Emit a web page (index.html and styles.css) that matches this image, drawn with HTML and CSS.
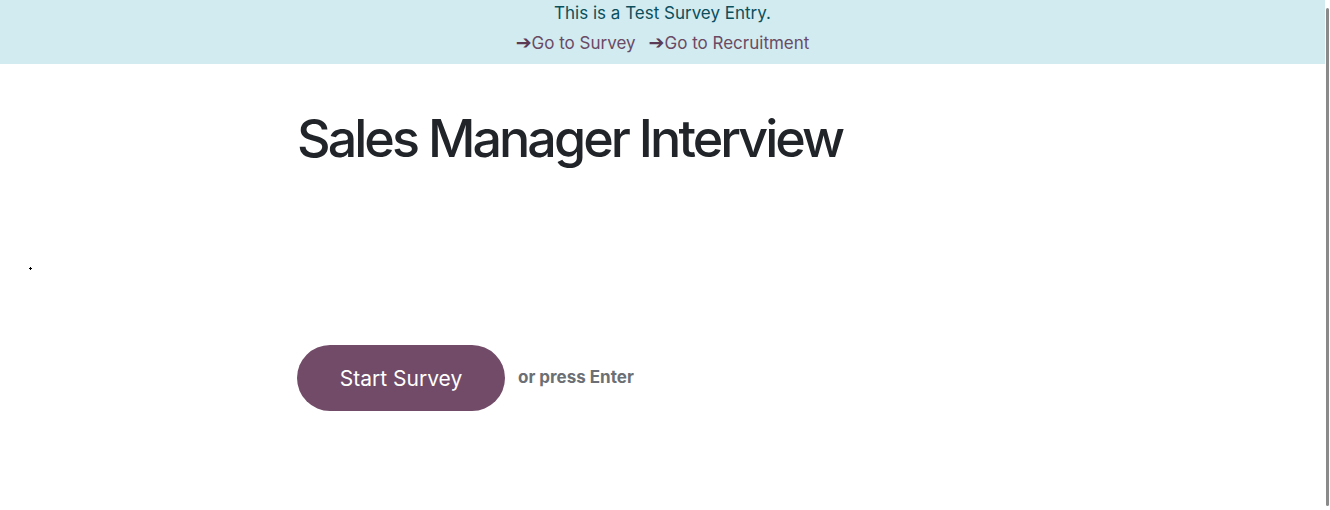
FILE: index.html
```html
<!DOCTYPE html>
<html lang="en">
<head>
  <meta charset="UTF-8">
  <title>Sales Manager Interview</title>
  <link rel="stylesheet" href="styles.css">
</head>
<body>
  <div class="page">
    <div class="test-banner">
      <div class="test-note">This is a Test Survey Entry.</div>
      <div class="test-links">
        <a href="#"><span class="arrow">&#10132;</span>Go to Survey</a>
        <a href="#"><span class="arrow">&#10132;</span>Go to Recruitment</a>
      </div>
    </div>

    <div class="survey-wrap">
      <h1 class="survey-title">Sales Manager Interview</h1>
      <div class="survey-start">
        <button type="button" class="start-btn">Start Survey</button>
        <span class="hint">or press Enter</span>
      </div>
    </div>
  </div>
  <span class="cursor-dot"></span>
  <div class="scroll-thumb"></div>
</body>
</html>
```

FILE: styles.css
```css
body {
  margin: 0;
  font-family: Inter, "Noto Sans", sans-serif;
  background-color: #fff;
  color: #212529;
}

.page {
  width: 1325px;
}

.test-banner {
  background-color: #d1ebf0;
  height: 64px;
  box-sizing: border-box;
  padding-top: 3px;
  text-align: center;
  font-size: 17px;
  line-height: 20px;
}

.test-note {
  color: #0b4f5c;
}

.test-links {
  margin-top: 9px;
  display: flex;
  justify-content: center;
  gap: 13px;
}

.test-links a {
  color: #6b4a64;
  text-decoration: none;
}

.arrow {
  font-family: "DejaVu Sans", sans-serif;
  font-size: 19px;
  font-weight: 700;
  line-height: 20px;
  color: #5a3a54;
}

.survey-wrap {
  padding-left: 297px;
}

.survey-title {
  margin: 40px 0 0;
  font-size: 52px;
  font-weight: 500;
  letter-spacing: -2.95px;
  line-height: 70px;
  color: #212529;
}

.survey-start {
  margin-top: 171px;
  display: flex;
  align-items: center;
  gap: 13px;
}

.start-btn {
  width: 208px;
  height: 66px;
  border: none;
  border-radius: 33px;
  background-color: #714b67;
  color: #fff;
  font-family: Inter, sans-serif;
  font-size: 21px;
  padding: 0;
}

.hint {
  font-size: 17px;
  font-weight: 700;
  color: #6c6f73;
  padding-bottom: 3px;
}

.cursor-dot {
  position: absolute;
  left: 29px;
  top: 267px;
  width: 3px;
  height: 3px;
  background:
    linear-gradient(#000, #000) center / 3px 1px no-repeat,
    linear-gradient(#000, #000) center / 1px 3px no-repeat;
}

.scroll-thumb {
  position: fixed;
  right: 1px;
  top: 8px;
  bottom: 4px;
  width: 3px;
  background-color: #8a8a8a;
  border-radius: 2px;
}
```
